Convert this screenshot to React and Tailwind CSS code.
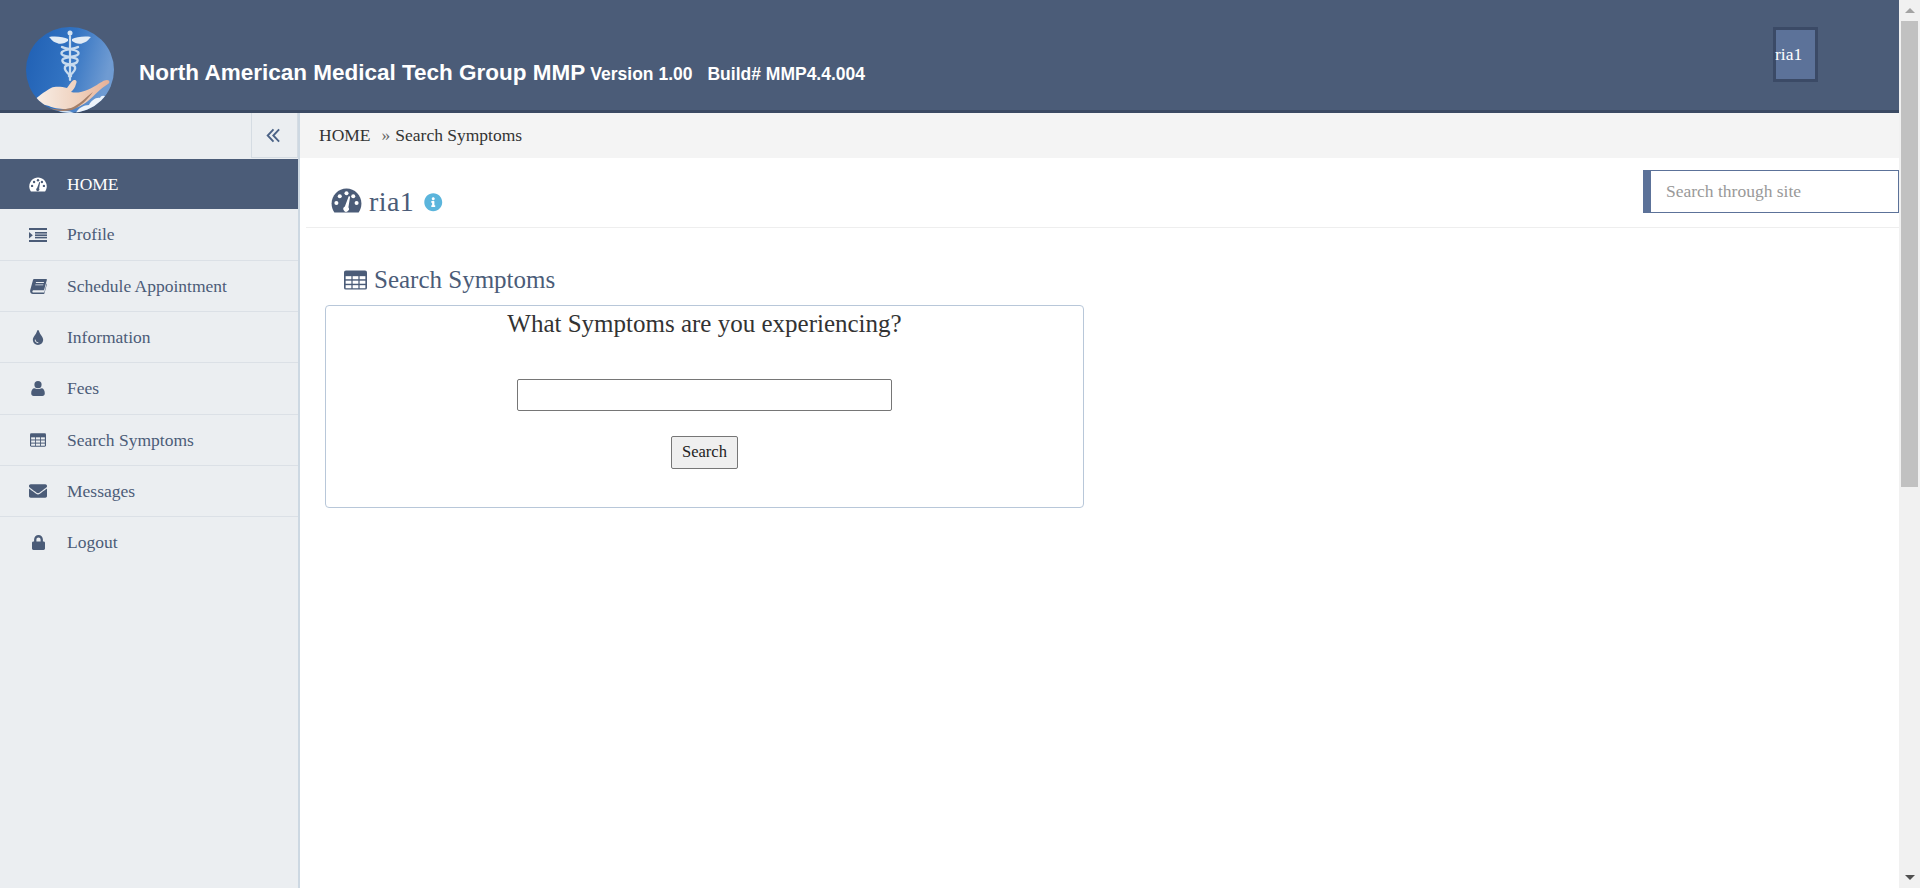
import React from "react";
import { FaTint, FaEnvelope, FaLock, FaInfoCircle } from "react-icons/fa";

function Logo() {
  return (
    <svg viewBox="0 0 88 86" className="h-[86px] w-[88px] shrink-0">
      <defs>
        <linearGradient id="sky" x1="0" y1="0" x2="1" y2="0.25">
          <stop offset="0" stopColor="#1f5fb3" />
          <stop offset="0.55" stopColor="#3273c2" />
          <stop offset="1" stopColor="#6f9bd2" />
        </linearGradient>
        <linearGradient id="skin" x1="0" y1="0" x2="1" y2="0">
          <stop offset="0" stopColor="#f8efe8" />
          <stop offset="0.6" stopColor="#efd0bc" />
          <stop offset="1" stopColor="#e6b097" />
        </linearGradient>
        <filter id="soft"><feGaussianBlur stdDeviation="0.45" /></filter>
        <clipPath id="disc"><ellipse cx="44" cy="43" rx="44" ry="43" /></clipPath>
      </defs>
      <g clipPath="url(#disc)">
        <rect width="88" height="86" fill="url(#sky)" />
        <g filter="url(#soft)">
          <path d="M50 86c2-5 8-8 13-8 2-4 7-8 11-7 1-3 5-3 7 0l7 4v11z" fill="#edf3fa" />
          <path d="M30 86c6-3 12-3 18 0z" fill="#d5e4f3" />
          <g fill="none" stroke="#c8dbee" strokeLinecap="round">
            <path d="M44 9v44" strokeWidth="2.200" />
            <path d="M36 20c3 2 14 2 16 5s-2 4-8 5-9 2-7 5 11 2 12 5-2 6-6 9" strokeWidth="2.400" />
            <path d="M52 20c-3 2-14 2-16 5s2 4 8 5 9 2 7 5-11 2-12 5 2 6 6 9" strokeWidth="2.400" />
          </g>
          <circle cx="44" cy="6" r="2.500" fill="#d5e3f1" />
          <path d="M42 12c-4-2-12-3-19-2 3 3 4 5 8 6 4 2 8 0 11-2z" fill="#e1ebf5" />
          <path d="M46 12c4-2 12-3 19-2-3 3-4 5-8 6-4 2-8 0-11-2z" fill="#e1ebf5" />
          <path d="M8 74c3-4 10-9 17-13 5-2 11-1 16 0 2-2 4-7 7-8 3 0 3 2 2 4-1 4-3 6-5 8 9 2 17-2 24-6 5-3 9-6 12-6 3 0 3 3 1 4-7 4-13 11-20 17-6 5-13 8-22 8-8 0-13-1-17-3-5-1-11-3-15-5z" fill="url(#skin)" />
          <path d="M20 80c8 3 18 3 25 1 8-3 14-10 22-16-6 8-13 15-21 18-9 2-19 1-26-3z" fill="#a57f68" />
        </g>
      </g>
    </svg>
  );
}

function Gauge({ className }) {
  return (
    <svg viewBox="0 0 32 26" className={className}>
      <path fill="currentColor" d="M16 .5C7.400.5.500 7.500.500 16.200c0 3.500 1 6.800 2.900 9.300h25.200c1.900-2.500 2.900-5.800 2.900-9.300C31.500 7.500 24.600.5 16 .5z" />
      <g fill="var(--dot)">
        <circle cx="16" cy="5.500" r="2.100" />
        <circle cx="9" cy="8.500" r="2.100" />
        <circle cx="23" cy="8.500" r="2.100" />
        <circle cx="5.500" cy="15.500" r="2.100" />
        <circle cx="26.500" cy="15.500" r="2.100" />
        <path d="M18.300 8.500l1.500.4-1.800 11.200a2.900 2.900 0 1 1-3.700-.9z" />
      </g>
    </svg>
  );
}

function TableIcon({ className }) {
  return (
    <svg viewBox="0 0 24 20" className={className}>
      <rect x="0" y="0" width="24" height="20" rx="2" fill="currentColor" />
      <g fill="var(--dot)">
        {[1.700, 9, 16.300].map((x) =>
          [6, 10.700, 15.400].map((y) => <rect key={`${x}-${y}`} x={x} y={y} width="6" height="3.200" />)
        )}
      </g>
    </svg>
  );
}

function IndentIcon({ className }) {
  return (
    <svg viewBox="0 0 18 14" className={className} fill="currentColor">
      <rect width="18" height="2" />
      <rect x="6" y="4" width="12" height="1.600" />
      <rect x="6" y="6.400" width="12" height="1.600" />
      <rect x="6" y="8.800" width="12" height="1.600" />
      <rect y="12" width="18" height="2" />
      <path d="M0 4v6.500L3.800 7.200z" />
    </svg>
  );
}

function BookIcon({ className }) {
  return (
    <svg viewBox="0 0 17 15" className={className} fill="currentColor">
      <path d="M4 0h12.300c.5 0 .7.400.6.800L14 11.300H3.500c-1.300 0-1.600 2.300-.2 2.300h10.900l2.400-9 .4.300-2.600 9.600c-.1.300-.3.500-.7.500H3c-2.100 0-3.400-1.900-2.700-4.200L3 1C3.200.4 3.500 0 4 0z" />
      <path d="M6 3h8l-.2.900h-8zM5.400 5.400h8l-.2.900h-8z" fill="#ebeef1" />
    </svg>
  );
}

function UserIcon({ className }) {
  return (
    <svg viewBox="0 0 14 15" className={className} fill="currentColor">
      <circle cx="7" cy="3.700" r="3.600" />
      <path d="M.2 12.300C.2 9.300 1.500 7.300 3.500 7.300c1.200 1 5.800 1 7 0 2 0 3.300 2 3.300 5 0 1.700-1 2.700-2.400 2.700H2.600C1.200 15 .2 14 .2 12.300z" />
    </svg>
  );
}

const items = [
  [IndentIcon, "Profile", "h-[14px] w-[18px]", "h-[52px]"],
  [BookIcon, "Schedule Appointment", "h-[15px] w-[17px]", "h-[51px]"],
  [FaTint, "Information", "h-[15px] w-[12px]", "h-[51px]"],
  [UserIcon, "Fees", "h-[15px] w-[14px]", "h-[52px]"],
  [TableIcon, "Search Symptoms", "h-[14px] w-[16px] [--dot:#ebeef1]", "h-[51px]"],
  [FaEnvelope, "Messages", "h-[18px] w-[18px]", "h-[51px]"],
  [FaLock, "Logout", "h-[15px] w-[13px]", "h-[51px]"],
];

export default function App() {
  return (
    <div className="flex h-[888px] w-[1920px] overflow-hidden bg-white font-['Liberation_Serif',serif]">
      <div className="flex w-[1899px] flex-col">
        <header className="flex h-[113px] shrink-0 items-end border-b-[3px] border-[#3b4a63] bg-[#4b5c78] pl-[26px]">
          <div className="-mb-[3px]"><Logo /></div>
          <div className="mb-[23px] ml-[25px] flex items-baseline font-['Liberation_Sans',sans-serif] font-bold text-white">
            <span className="text-[22.5px] leading-[28px]">North American Medical Tech Group MMP</span>
            <span className="ml-[5px] text-[17.5px]">Version 1.00</span>
            <span className="ml-[15px] text-[17.5px]">Build# MMP4.4.004</span>
          </div>
          <div className="mb-[28px] ml-auto mr-[81px] flex h-[55px] w-[45px] items-center border-[3px] border-[#3b4a66] bg-[#5c7299] text-[17.5px] text-white">
            <span className="-ml-px">ria1</span>
          </div>
        </header>
        <div className="flex min-h-0 flex-1">
          <aside className="w-[300px] shrink-0 border-r-2 border-[#cdd8e2] bg-[#ebeef1]">
            <div className="flex h-[45px] justify-end">
              <div className="flex w-[47px] items-center justify-center border-x border-b border-[#d5dce3] pr-[2px]">
                <svg viewBox="0 0 16 16" className="h-[15px] w-[15px]" fill="none" stroke="#4b6286" strokeWidth="2">
                  <path d="M8 1.500 1.800 8 8 14.500M14 1.500 7.800 8 14 14.500" />
                </svg>
              </div>
            </div>
            <nav className="mt-px text-[17.5px]">
              <div className="flex h-[50px] items-center bg-[#4b5c78] text-white">
                <span className="flex w-[67px] justify-center pl-[9px]">
                  <Gauge className="h-[15px] w-[18px] [--dot:#4b5c78]" />
                </span>
                <span>HOME</span>
              </div>
              {items.map(([Icon, label, size, height]) => (
                <div key={label} className={`flex ${height} items-center border-b border-[#dbe0e6] text-[#4b5c78] last:border-b-0`}>
                  <span className="flex w-[67px] justify-center pl-[9px]"><Icon className={size} /></span>
                  <span>{label}</span>
                </div>
              ))}
            </nav>
          </aside>
          <main className="min-w-0 flex-1">
            <div className="flex h-[45px] items-center bg-[#f4f4f4] pl-[19px] text-[17.5px] text-[#333]">
              <span>HOME</span>
              <span className="ml-[11px] text-[#666]">»</span>
              <span className="ml-[5px]">Search Symptoms</span>
            </div>
            <div className="relative ml-[6px] flex h-[70px] items-start border-b border-[#eeeeee] pl-[25px] pt-[30px]">
              <Gauge className="h-[25px] w-[31px] text-[#4b5c78] [--dot:#ffffff]" />
              <span className="ml-[7px] -mt-[2px] text-[28px] leading-[31px] tracking-[0.4px] text-[#4b5c78]">ria1</span>
              <FaInfoCircle className="ml-[10px] mt-[5px] text-[18.5px] text-[#5bb5dc]" />
              <div className="absolute right-0 top-[12px] flex h-[43px] w-[256px] items-center border border-l-[8px] border-[#5c7299] bg-white pl-[15px] text-[17.5px] text-[#999]">
                Search through site
              </div>
            </div>
            <section className="ml-[25px] mt-[36px]">
              <div className="flex items-center pl-[19px] text-[25px] leading-[32px] text-[#4b5c78]">
                <TableIcon className="h-[20px] w-[23px] [--dot:#ffffff]" />
                <span className="ml-[7px]">Search Symptoms</span>
              </div>
              <div className="mt-[9px] flex h-[203px] w-[759px] flex-col items-center rounded-[4px] border border-[#b8c7d9] text-[#333]">
                <div className="mt-[2px] text-[25px] leading-[32px]">What Symptoms are you experiencing?</div>
                <div className="mt-[39px] h-[32px] w-[375px] rounded-[2px] border border-[#767676] bg-white" />
                <button className="mt-[25px] h-[33px] w-[67px] rounded-[2px] border border-[#767676] bg-[#efefef] text-[16.5px] text-[#222]">Search</button>
              </div>
            </section>
          </main>
        </div>
      </div>
      <div className="flex w-[21px] flex-col items-center bg-[#f1f1f1]">
        <div className="flex h-[21px] items-center justify-center">
          <div className="h-0 w-0 border-x-[5px] border-b-[5px] border-x-transparent border-b-[#a3a3a3]" />
        </div>
        <div className="h-[466px] w-[17px] bg-[#c1c1c1]" />
        <div className="mt-auto flex h-[21px] items-center justify-center">
          <div className="h-0 w-0 border-x-[5px] border-t-[5px] border-x-transparent border-t-[#505050]" />
        </div>
      </div>
    </div>
  );
}
